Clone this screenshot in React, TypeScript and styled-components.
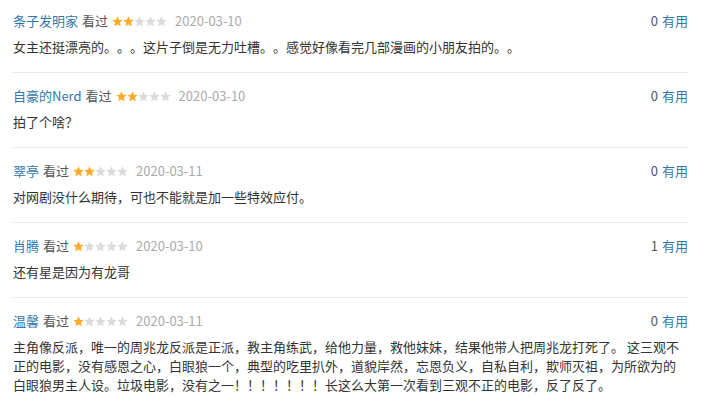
import styled, { createGlobalStyle } from "styled-components";

const GlobalStyle = createGlobalStyle`
	body {
		margin: 0;
		background: #fff;
		font-family: "Noto Sans CJK SC", "Noto Sans", sans-serif;
		font-size: 13px;
		color: #333;
		text-spacing-trim: space-all;
	}
`;

const List = styled.div`
	padding: 0 18px 0 13px;
`;

const Item = styled.div`
	padding: 13px 0 16px;
	border-bottom: 1px solid #e8e8e8;
	&:first-child {
		padding-top: 11px;
	}
	&:last-child {
		border-bottom: none;
	}
`;

const Head = styled.div`
	display: flex;
	align-items: center;
	justify-content: space-between;
	height: 20px;
	line-height: 20px;
`;

const Info = styled.div`
	display: flex;
	align-items: center;
`;

const Name = styled.span`
	color: #37a;
`;

const Seen = styled.span`
	color: #555;
	margin-left: 4px;
`;

const Stars = styled.span`
	display: inline-flex;
	margin-left: 4px;
`;

const DateText = styled.span`
	color: #aaa;
	margin-left: 8px;
`;

const Votes = styled.div`
	color: #555;
	span {
		color: #37a;
		margin-left: 4px;
	}
`;

const Body = styled.p`
	margin: 6px 0 0;
	line-height: 19px;
	color: #333;
`;

function Star({ on }: { on: boolean }) {
	return (
		<svg width="11" height="11" viewBox="1 1 22 22">
			<polygon
				points="12,1.5 15.1,8.4 22.5,9.2 16.9,14.2 18.5,21.6 12,17.8 5.5,21.6 7.1,14.2 1.5,9.2 8.9,8.4"
				fill={on ? "#ffac2d" : "#dcdcdc"}
			/>
		</svg>
	);
}

const reviews = [
	{
		name: "条子发明家",
		rating: 2,
		date: "2020-03-10",
		votes: 0,
		text: "女主还挺漂亮的。。。这片子倒是无力吐槽。。感觉好像看完几部漫画的小朋友拍的。。",
	},
	{ name: "自豪的Nerd", rating: 2, date: "2020-03-10", votes: 0, text: "拍了个啥？" },
	{
		name: "翠亭",
		rating: 2,
		date: "2020-03-11",
		votes: 0,
		text: "对网剧没什么期待，可也不能就是加一些特效应付。",
	},
	{ name: "肖腾", rating: 1, date: "2020-03-10", votes: 1, text: "还有星是因为有龙哥" },
	{
		name: "温馨",
		rating: 1,
		date: "2020-03-11",
		votes: 0,
		text: "主角像反派，唯一的周兆龙反派是正派，教主角练武，给他力量，救他妹妹，结果他带人把周兆龙打死了。 这三观不正的电影，没有感恩之心，白眼狼一个，典型的吃里扒外，道貌岸然，忘恩负义，自私自利，欺师灭祖，为所欲为的白眼狼男主人设。垃圾电影，没有之一！！！！！！！长这么大第一次看到三观不正的电影，反了反了。",
	},
];

export default function App() {
	return (
		<>
			<GlobalStyle />
			<List>
				{reviews.map((r) => (
					<Item key={r.name}>
						<Head>
							<Info>
								<Name>{r.name}</Name>
								<Seen>看过</Seen>
								<Stars>
									{[0, 1, 2, 3, 4].map((i) => (
										<Star key={i} on={i < r.rating} />
									))}
								</Stars>
								<DateText>{r.date}</DateText>
							</Info>
							<Votes>
								{r.votes}
								<span>有用</span>
							</Votes>
						</Head>
						<Body>{r.text}</Body>
					</Item>
				))}
			</List>
		</>
	);
}
